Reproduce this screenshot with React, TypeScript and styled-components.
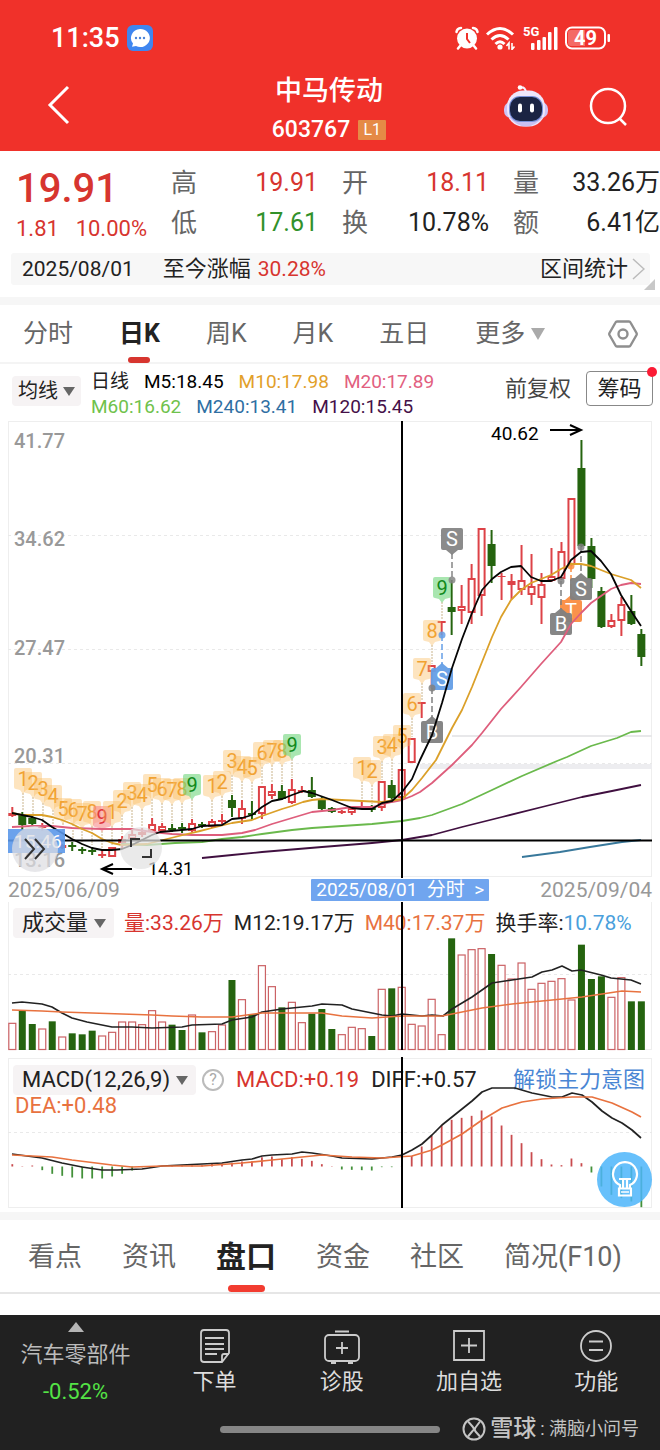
import React from "react";
import styled, { createGlobalStyle, css } from "styled-components";

const GlobalStyle = createGlobalStyle`
  * { box-sizing: border-box; }
  body {
    margin: 0;
    background: #fff;
    color: #222;
    font-family: Roboto, "Noto Sans CJK SC", sans-serif;
  }
  button, a {
    font: inherit;
    color: inherit;
    text-decoration: none;
    border: 0;
    padding: 0;
    background: none;
    cursor: pointer;
  }
  svg { display: block; }
`;

const RED = "#d7352f";
const UP = "#dd4247";
const DOWN = "#25640f";

/* ---------- header ---------- */

const Header = styled.header`
  background: #f0312a;
  color: #fff;
  height: 151px;
`;

const StatusBar = styled.div`
  display: flex;
  align-items: center;
  justify-content: space-between;
  height: 76px;
  padding: 0 49px 0 51px;
`;

const StatusGroup = styled.div<{ $gap: number }>`
  display: flex;
  align-items: center;
  gap: ${(p) => p.$gap}px;
`;

const Clock = styled.span`
  font-size: 27px;
  font-weight: 500;
  line-height: 32px;
`;

const TitleBar = styled.div`
  display: grid;
  grid-template-columns: 1fr auto 1fr;
  padding: 0 32px 0 46px;
  height: 72px;
`;

const BackButton = styled.button`
  justify-self: start;
  align-self: start;
  margin-top: 9px;
`;

const StockTitle = styled.div`
  display: flex;
  flex-direction: column;
  align-items: center;
  margin-right: 16px;
`;

const StockName = styled.h1`
  margin: 0;
  padding-bottom: 10px;
  font-size: 27px;
  font-weight: 500;
  line-height: 30px;
`;

const StockCode = styled.div`
  display: flex;
  align-items: center;
  gap: 8px;
  font-size: 23px;
  font-weight: 500;
  line-height: 28px;
`;

const LevelBadge = styled.span`
  width: 28px;
  text-align: center;
  background: #e58a46;
  font-size: 16px;
  font-weight: 400;
  line-height: 20px;
  border-radius: 1px;
`;

const HeaderActions = styled.div`
  display: flex;
  justify-content: flex-end;
  align-items: flex-start;
  padding-top: 8px;
  gap: 40px;
`;

/* ---------- quote ---------- */

const Quote = styled.section`
  display: grid;
  grid-template-columns: 131px repeat(3, 1fr);
  column-gap: 24px;
  padding: 12px 0 10px 16px;
`;

const LastPrice = styled.div`
  color: ${RED};
  font-size: 40px;
  font-weight: 500;
  line-height: 52px;
`;

const Change = styled.div`
  display: flex;
  justify-content: space-between;
  color: ${RED};
  font-size: 22px;
  line-height: 28px;
`;

const StatList = styled.dl`
  margin: 0;
`;

const Stat = styled.div<{ $color?: string }>`
  display: flex;
  justify-content: space-between;
  line-height: 40px;
  dt { font-size: 26px; color: #666; }
  dd { margin: 0; font-size: 25px; color: ${(p) => p.$color ?? "#222"}; white-space: nowrap; }
`;

const RangeStrip = styled.div`
  position: relative;
  display: flex;
  align-items: center;
  margin: 0 10px 12px 11px;
  padding: 0 5px 0 11px;
  height: 32px;
  background: #f7f7f7;
  font-size: 22px;
  line-height: 32px;
  border-radius: 3px;
`;

const RangeDate = styled.span`
  font-size: 21px;
  margin-right: 29px;
`;

const RangeValue = styled.span`
  font-size: 21px;
  color: ${RED};
  margin-left: 7px;
`;

const RangeLink = styled.a`
  display: flex;
  align-items: center;
  gap: 4px;
  margin-left: auto;
`;

const Fold = styled.svg`
  position: absolute;
  right: -5px;
  bottom: -5px;
`;

const Band = styled.div`
  height: 8px;
  background: #f6f6f6;
`;

/* ---------- period tabs ---------- */

const PeriodTabs = styled.nav`
  display: flex;
  align-items: center;
  gap: 46px;
  height: 59px;
  padding: 0 22px 0 23px;
  border-bottom: 2px solid #f4f4f4;
`;

const PeriodTab = styled.button<{ $active?: boolean }>`
  position: relative;
  display: flex;
  align-items: center;
  gap: 6px;
  font-size: 25px;
  line-height: 59px;
  color: #666;
  ${(p) =>
    p.$active &&
    css`
      color: #222;
      font-weight: 700;
      &::after {
        content: "";
        position: absolute;
        left: 50%;
        bottom: 0;
        width: 22px;
        height: 6px;
        margin-left: -11px;
        border-radius: 3px;
        background: ${RED};
      }
    `}
`;

const SettingsButton = styled.button`
  margin-left: auto;
`;

/* ---------- indicator header ---------- */

const Averages = styled.div`
  display: flex;
  align-items: flex-start;
  height: 57px;
  padding: 7px 7px 0 12px;
`;

const Picker = styled.button<{ $size?: number }>`
  display: flex;
  align-items: center;
  gap: 6px;
  height: 30px;
  padding: 0 8px 0 9px;
  border-radius: 4px;
  background: #f6f3f4;
  font-size: ${(p) => p.$size ?? 22}px;
  line-height: 30px;
  color: #222;
`;

const AveragePicker = styled(Picker)`
  gap: 5px;
  margin-top: 5px;
  padding: 0 6px;
`;

const Legend = styled.div`
  display: grid;
  margin: -2px 0 0 10px;
`;

const LegendRow = styled.div`
  display: flex;
  gap: 15px;
  font-size: 19px;
  line-height: 25px;
  white-space: nowrap;
`;

const Tint = styled.span<{ $color?: string }>`
  color: ${(p) => p.$color ?? "#222"};
`;

const Adjust = styled.button`
  margin-left: auto;
  margin-right: 15px;
  font-size: 22px;
  line-height: 36px;
  color: #444;
`;

const ChipsButton = styled.button`
  position: relative;
  width: 67px;
  height: 35px;
  border: 1px solid #888;
  border-radius: 4px;
  font-size: 22px;
  line-height: 33px;
  &::after {
    content: "";
    position: absolute;
    top: -5px;
    right: -5px;
    width: 10px;
    height: 10px;
    border-radius: 50%;
    background: #fb1b35;
  }
`;

/* ---------- charts ---------- */

const Panel = styled.section`
  display: grid;
  position: relative;
  margin: 0 8px;
  > * { grid-area: 1 / 1; min-width: 0; }
`;

const Chart = styled.svg`
  width: 100%;
  height: auto;
  font-family: Roboto, "Noto Sans CJK SC", sans-serif;
`;

const PanelHeader = styled.div<{ $gap: number }>`
  display: flex;
  align-self: start;
  align-items: center;
  gap: ${(p) => p.$gap}px;
  padding: 5px 0 0 5px;
  font-size: 21px;
  line-height: 32px;
  white-space: nowrap;
`;

const MacdHeader = styled.div`
  align-self: start;
  padding: 8px 7px 0 5px;
  font-size: 22px;
  white-space: nowrap;
`;

const MacdRow = styled.div`
  display: flex;
  align-items: center;
  gap: 12px;
  line-height: 30px;
`;

const DeaRow = styled.div`
  padding-left: 2px;
  line-height: 22px;
  color: #e8723f;
`;

const HelpButton = styled.button`
  width: 22px;
  height: 22px;
  margin-left: -6px;
  border: 2px solid #bbb;
  border-radius: 50%;
  color: #aaa;
  font-size: 16px;
  line-height: 18px;
`;

const UnlockLink = styled.a`
  margin-left: auto;
  color: #4a86d4;
`;

const FloatingButton = styled.button<{ $left: string; $size: number; $bg: string; $bottom: number }>`
  position: absolute;
  left: ${(p) => p.$left};
  bottom: ${(p) => p.$bottom}px;
  width: ${(p) => p.$size}px;
  height: ${(p) => p.$size}px;
  display: grid;
  place-items: center;
  border-radius: 50%;
  background: ${(p) => p.$bg};
`;

const DateRow = styled.div`
  display: flex;
  align-items: center;
  height: 24px;
  margin: 0 8px;
  font-size: 21px;
  line-height: 26px;
  color: #999;
`;

const DatePill = styled.button`
  display: flex;
  align-items: center;
  justify-content: space-between;
  width: 178px;
  height: 22px;
  margin: 0 51px 1px auto;
  padding: 0 5px;
  background: #70a5ef;
  color: #fff;
  font-size: 19px;
  line-height: 22px;
  border-radius: 1px;
`;

/* ---------- section tabs ---------- */

const SectionTabs = styled.nav`
  display: flex;
  gap: 40px;
  height: 74px;
  padding: 0 28px;
  margin-bottom: 21px;
  border-bottom: 2px solid #e6e6e6;
`;

const SectionTab = styled.button<{ $active?: boolean }>`
  position: relative;
  font-size: 27px;
  line-height: 74px;
  color: #666;
  white-space: nowrap;
  ${(p) =>
    p.$active &&
    css`
      color: #222;
      font-size: 30px;
      font-weight: 700;
      &::after {
        content: "";
        position: absolute;
        left: 50%;
        bottom: 0;
        width: 37px;
        height: 7px;
        margin-left: -18px;
        border-radius: 4px;
        background: #f23c30;
      }
    `}
`;

/* ---------- footer ---------- */

const Footer = styled.footer`
  background: #212121;
  color: #ddd;
  height: 135px;
`;

const FooterNav = styled.nav`
  display: grid;
  grid-template-columns: 151px repeat(4, 1fr);
  height: 98px;
`;

const FooterItem = styled.button`
  display: flex;
  flex-direction: column;
  align-items: center;
  padding-top: 12px;
  font-size: 22px;
  line-height: 34px;
`;

const Sector = styled.button`
  display: flex;
  flex-direction: column;
  align-items: center;
  padding-top: 7px;
  font-size: 22px;
  line-height: 37px;
  color: #bbb;
  svg { margin-bottom: 4px; }
`;

const SectorChange = styled.span`
  color: #54e346;
`;

const BottomRow = styled.div`
  display: grid;
  grid-template-columns: 1fr 220px 1fr;
  align-items: center;
  height: 34px;
`;

const HomeBar = styled.div`
  grid-column: 2;
  height: 7px;
  margin-bottom: 2px;
  border-radius: 4px;
  background: #868686;
`;

const Watermark = styled.div`
  display: flex;
  align-items: center;
  gap: 4px;
  justify-content: flex-end;
  padding-right: 21px;
  margin-bottom: 2px;
  font-size: 18px;
  line-height: 28px;
  color: #c4c4c4;
  white-space: nowrap;
`;

const Brand = styled.b`
  font-size: 23px;
  font-weight: 500;
`;

/* ---------- data ---------- */

const FIRST_X = 12.3;
const STEP = 9.985;
const cx = (i: number) => FIRST_X + STEP * i;

/* [direction, high, bodyTop, bodyBottom, low] in chart units */
type Candle = [1 | 0, number, number, number, number];
const candles: (Candle | null)[] = [
  [1, 807, 813, 816, 817], [0, 812, 814, 825, 831], [0, 816, 818, 824, 826], [1, 823, 826, 828, 831],
  null, [1, 844, 845, 848, 849], [0, 842, 845, 847, 851], [0, 847, 849, 851, 854], [0, 847, 850, 852, 855],
  [1, 850, 854, 856, 858], [1, 847, 847, 857, 857], [1, 836, 839, 843, 848], [1, 830, 834, 839, 840],
  [1, 828, 832, 835, 837], [1, 818, 824, 831, 832], [1, 823, 826, 831, 832], [0, 824, 828, 830, 832],
  [0, 823, 827, 829, 833], [1, 819, 823, 831, 832], [0, 822, 824, 826, 828], [1, 819, 821, 827, 828],
  [1, 814, 820, 822, 824], [0, 795, 800, 808, 817], [1, 800, 808, 819, 824], [0, 801, 813, 815, 820],
  [1, 786, 786, 814, 819], [1, 784, 791, 796, 799], [0, 785, 791, 799, 800], [1, 779, 789, 803, 804],
  [1, 786, 790, 792, 793], [0, 777, 790, 797, 798], [0, 796, 800, 809, 810], [0, 807, 808, 812, 813],
  [1, 810, 811, 813, 814], [1, 808, 808, 813, 815], [1, 801, 806, 808, 809], [0, 805, 808, 810, 812],
  [1, 781, 781, 808, 811], [0, 780, 785, 798, 800], [1, 769, 769, 798, 798], [1, 738, 738, 763, 763],
  [1, 702, 702, 704, 718], [1, 665, 665, 672, 688], [1, 621, 621, 623, 635], [0, 580, 607, 612, 635],
  [1, 585, 606, 611, 624], [1, 564, 578, 613, 624], [1, 528, 528, 596, 616], [0, 530, 544, 566, 583],
  [1, 573, 576, 577, 600], [1, 574, 581, 585, 599], [1, 545, 580, 590, 595], [1, 554, 586, 595, 605],
  [1, 573, 584, 598, 624], [1, 548, 576, 581, 582], [1, 542, 551, 579, 580], [1, 498, 498, 565, 566],
  [0, 440, 468, 546, 547], [0, 538, 546, 579, 588], [0, 587, 591, 627, 628], [1, 614, 620, 627, 628],
  [1, 597, 604, 621, 636], [0, 595, 611, 624, 625], [0, 629, 634, 657, 666],
];

/* heights in thirds of a unit above the base line, g = falling day */
const volumes =
  "80r 117g 78g 63r 86g 39r 50g 47g 58g 42r 53r 84r 84r 76r 118r 84r 76g 60g 105r 53g 55r 75r 210g 151r 107g 253r 190r 128g 143r 82r 109g 123g 63g 46r 68r 64r 42g 182r 185g 188r 77r 72r 152r 46r 335g 285r 301r 304r 288g 254r 213r 261r 182r 200r 206r 214r 150r 316g 213g 221g 158r 217r 146g 146g"
    .split(" ")
    .map((v) => ({ h: parseInt(v, 10) / 3, up: v.endsWith("r") }));

const macd = [
  7, 1, 3, -11, -22, -28, -33, -36, -36, -36, -30, -22, -12, -2, 1, 1, 2, 3, 3, 4, 8, 9, 11, 15, 16, 28, 30, 22, 28, 23,
  17, 7, 1, -9, -10, -11, -12, -2, -2, 2, 32, 60, 92, 125, 140, 146, 152, 168, 150, 123, 95, 70, 43, 22, 6, 4, 24, 10,
  -18, -60, -85, -95, -105, -122,
];

const averages: [string, string][] = [
  ["#6ab94c", "122,844 147,845 175,843 202,842 222,839 242,837 262,834 292,830 312,828 342,826 372,824 402,821 420,818 432,815 462,804 492,790 522,776 557,761 567,757 591,746 617,738 631,732 641,731"],
  ["#401040", "202,858 232,855 262,852 322,847 372,843 402,840 432,835 462,827 502,817 542,807 582,797 612,791 641,785"],
  ["#38789b", "522,857 560,852 590,847 622,842 641,840"],
  ["#de5e7c", "12,827 32,826 52,826 72,828 102,829 132,829 152,832 172,834 192,835 222,835 242,833 255,830 272,824 292,818 312,812 332,810 352,807 372,807 392,802 402,800 412,796 420,792 432,783 452,765 472,745 482,733 501,709 521,687 541,664 561,642 571,624 581,613 591,603 601,596 611,589 621,585 631,583 641,584"],
  ["#dba029", "12,813 22,815 42,815 52,817 62,820 72,824 82,829 92,833 102,839 112,843 122,845 147,844 163,840 183,835 200,831 212,828 232,823 252,820 262,816 282,809 292,806 303,802 312,800 322,799 342,800 362,801 382,802 402,799 412,790 422,778 436,760 452,728 462,710 472,687 482,662 492,637 501,617 511,600 521,590 531,583 541,579 551,575 561,569 571,564 581,564 591,566 601,570 611,574 621,577 631,580 641,588"],
  ["#050505", "12,813 32,817 42,820 52,827 62,833 72,839 82,844 92,848 102,850 112,850 122,849 132,845 142,840 152,835 160,832 192,829 202,826 222,825 232,819 242,818 252,815 262,807 272,801 282,799 292,795 303,791 312,793 332,800 342,804 352,808 362,809 372,809 382,803 392,801 402,792 412,779 420,760 432,735 442,703 452,668 462,639 472,613 482,590 492,579 501,572 511,567 521,566 531,577 541,581 551,581 561,577 571,560 581,552 591,551 601,561 611,574 621,595 631,611 641,626"],
];

type TagTone = "amber" | "green" | "red";
const tagTones: Record<TagTone, [string, string]> = {
  amber: ["#fbbb5f", "#f1a231"],
  green: ["#6fd67b", "#128a1c"],
  red: ["#f78b8b", "#e0343d"],
};
/* [label, x, y, lineEnd, tone] */
const counts: [string, number, number, number, TagTone?][] = [
  ["1", 23, 779, 811], ["2", 33, 783, 815], ["3", 43, 789, 822], ["4", 53, 796, 828], ["5", 63, 809, 838],
  ["6", 73, 810, 840], ["7", 82, 814, 845], ["8", 92, 812, 845], ["9", 102, 817, 848, "red"], ["1", 112, 812, 845],
  ["2", 122, 801, 834], ["3", 132, 793, 829], ["4", 142, 795, 827], ["5", 152, 785, 817], ["6", 162, 789, 822],
  ["7", 172, 790, 823], ["8", 182, 789, 822], ["9", 192, 785, 818, "green"], ["1", 212, 786, 818], ["2", 222, 782, 813],
  ["3", 232, 761, 794], ["4", 242, 767, 799], ["5", 252, 768, 800], ["6", 262, 753, 785], ["7", 272, 751, 783],
  ["8", 282, 751, 784], ["9", 292, 745, 778, "green"], ["1", 362, 768, 800], ["2", 372, 771, 804], ["3", 382, 747, 780],
  ["4", 392, 745, 779], ["5", 402, 736, 768], ["6", 412, 704, 737], ["7", 422, 669, 701], ["8", 432, 631, 664],
  ["9", 442, 588, 620, "green"],
];

/* [label, x, y, anchorY, color] */
const trades: [string, number, number, number, string][] = [
  ["S", 452, 539, 580, "#858585"], ["S", 442, 679, 635, "#659fe6"], ["B", 432, 732, 688, "#808080"],
  ["T", 571, 611, 566, "#fa8d42"], ["S", 581, 589, 547, "#808080"], ["B", 561, 624, 581, "#808080"],
];

const GRID = { stroke: "#e9e9e9", strokeWidth: 1, strokeDasharray: "3 3" };

/* ---------- drawings ---------- */

const Caret = ({ w = 12, h = 9, color = "#666" }: { w?: number; h?: number; color?: string }) => (
  <svg width={w} height={h} viewBox="0 0 12 9" preserveAspectRatio="none" aria-hidden="true">
    <path d="M0 0H12L6 9Z" fill={color} />
  </svg>
);

const PriceChart = () => (
  <Chart viewBox="8 421 644 457" role="img" aria-label="日K线图">
    <rect x="8.5" y="421.5" width="643" height="455" fill="none" stroke="#eee" />
    {[535, 649, 763].map((y) => (
      <line key={y} x1="8" x2="652" y1={y + 0.5} y2={y + 0.5} {...GRID} />
    ))}
    <rect x="452" y="735" width="200" height="2" fill="#e8e8ea" />
    <rect x="420" y="764" width="232" height="5" fill="#ededf0" />
    <g fontSize="20" fontWeight="500" fill="#999">
      <text x="14" y="448">41.77</text>
      <text x="14" y="546">34.62</text>
      <text x="14" y="655">27.47</text>
      <text x="14" y="763">20.31</text>
      <text x="14" y="867">13.16</text>
    </g>

    {candles.map((c, i) => {
      if (!c) return null;
      const [up, hi, top, bottom, lo] = c;
      const x = cx(i);
      const color = up ? UP : DOWN;
      const thin = bottom - top <= 3;
      return (
        <g key={i} stroke={color} strokeWidth="2">
          <line x1={x} x2={x} y1={hi} y2={top} />
          <line x1={x} x2={x} y1={bottom} y2={lo} />
          {thin ? (
            <rect x={x - 4} y={top} width="8" height={bottom - top} fill={color} stroke="none" />
          ) : (
            <rect x={x - 3} y={top + 1} width="6" height={bottom - top - 2} fill={up ? "#fff" : color} />
          )}
        </g>
      );
    })}

    {counts.map(([label, x, y, end, tone = "amber"], i) => {
      const [bg, fg] = tagTones[tone];
      return (
        <g key={i}>
          <line x1={x} x2={x} y1={y + 14} y2={end} stroke="#c9b48c" strokeDasharray="2 1" />
          <path
            d={`M${x - 7} ${y - 11}h14q2 0 2 2v17q0 2-2 2l-4 1-3 4-3-4-4-1q-2 0-2-2v-17q0-2 2-2z`}
            fill={bg}
            opacity={tone === "amber" ? 0.4 : 0.6}
          />
          <text x={x} y={y + 7} fontSize="20" textAnchor="middle" fill={fg}>{label}</text>
        </g>
      );
    })}

    {trades.map(([label, x, y, anchor, color], i) => {
      const down = anchor > y;
      const tip = down ? `M${x - 6} ${y + 11}h12l-6 5z` : `M${x - 6} ${y - 11}h12l-6-5z`;
      return (
        <g key={i}>
          <line x1={x} x2={x} y1={down ? y + 14 : anchor} y2={down ? anchor : y - 14} stroke={color} strokeWidth="1.5" strokeDasharray="6 3" />
          <circle cx={x} cy={anchor} r="3.5" fill={color} opacity="0.85" />
          <g opacity="0.95">
            <path d={tip} fill={color} />
            <rect x={x - 11} y={y - 11} width="22" height="22" rx="2" fill={color} />
          </g>
          <text x={x} y={y + 7} fontSize="20" textAnchor="middle" fill="#fff">{label}</text>
        </g>
      );
    })}

    {averages.map(([color, points]) => (
      <polyline key={color} points={points} fill="none" stroke={color} strokeWidth="1.8" strokeLinejoin="round" />
    ))}

    <g stroke="#000" strokeWidth="2" fill="none">
      <path d="M550 430h30M570 425l11 5-11 5" />
      <path d="M132 869h-29M113 864l-11 5 11 5" />
      <path d="M8 840.5h644M402 421v457" />
    </g>
    <text x="491" y="440" fontSize="19" fill="#000">40.62</text>
    <text x="148" y="875" fontSize="18" fill="#000">14.31</text>

    <rect x="8" y="829" width="57" height="24" fill="#5b98ea" opacity="0.9" />
    <text x="14" y="848" fontSize="19" fill="#fff">15.46</text>
  </Chart>
);

const VolumeChart = () => (
  <Chart viewBox="8 902 644 155" role="img" aria-label="成交量图">
    <rect x="8.5" y="900.5" width="643" height="149" fill="none" stroke="#eee" />
    <line x1="8" x2="652" y1="974.5" y2="974.5" {...GRID} />
    {volumes.map(({ h, up }, i) =>
      up ? (
        <rect key={i} x={cx(i) - 3.5} y={1050 - h} width="7" height={h - 0.5} fill="#fff" stroke="#cb6265" strokeWidth="1.2" />
      ) : (
        <rect key={i} x={cx(i) - 3.5} y={1050 - h} width="7" height={h} fill={DOWN} />
      )
    )}
    <polyline
      fill="none" stroke="#222" strokeWidth="1.6" strokeLinejoin="round"
      points="12,1003 22,1002 42,1004 52,1007 62,1013 72,1018 87,1022 112,1027 132,1027 152,1028 182,1027 192,1025 222,1024 232,1020 252,1017 262,1012 282,1009 302,1007 312,1006 322,1004 342,1005 352,1009 362,1011 382,1015 392,1016 402,1014 422,1016 432,1015 443,1016 452,1009 472,997 492,983 512,980 532,977 542,972 552,970 562,966 572,971 581,970 601,975 611,978 631,980 641,984"
    />
    <polyline
      fill="none" stroke="#e8723f" strokeWidth="1.6" strokeLinejoin="round"
      points="12,1010 42,1011 62,1012 122,1014 152,1015 172,1016 202,1017 232,1017 262,1013 292,1013 322,1013 342,1016 372,1018 402,1016 442,1016 452,1014 482,1008 512,1004 542,1001 582,997 602,994 622,991 641,992"
    />
    <path d="M402 902v148" stroke="#000" strokeWidth="2" />
  </Chart>
);

const MacdChart = () => (
  <Chart viewBox="8 1057 644 155" role="img" aria-label="MACD图">
    <rect x="8.5" y="1058.5" width="643" height="149" fill="none" stroke="#eee" />
    <line x1="8" x2="652" y1="1132.5" y2="1132.5" {...GRID} />
    {macd.map((v, i) => (
      <line key={i} x1={cx(i)} x2={cx(i)} y1={1166.5} y2={1166.5 - v / 3} stroke={v > 0 ? "#c94b4e" : "#43913a"} strokeWidth="1.8" />
    ))}
    <polyline
      fill="none" stroke="#222" strokeWidth="1.7" strokeLinejoin="round"
      points="12,1154 42,1158 62,1163 82,1167 102,1170 117,1170 142,1169 162,1166 202,1164 222,1163 242,1160 252,1159 262,1156 272,1155 292,1154 302,1152 312,1153 332,1156 342,1158 372,1159 392,1157 402,1155 412,1150 422,1144 432,1135 442,1125 452,1117 472,1101 482,1092 492,1088 515,1088 532,1093 552,1097 562,1097 572,1093 582,1095 592,1102 602,1111 612,1118 622,1123 632,1130 641,1138"
    />
    <polyline
      fill="none" stroke="#e8723f" strokeWidth="1.7" strokeLinejoin="round"
      points="12,1155 32,1156 52,1157 72,1160 112,1165 132,1167 162,1166 202,1166 242,1163 272,1160 302,1157 322,1155 352,1157 382,1158 412,1156 432,1150 442,1145 462,1134 482,1120 502,1108 522,1102 542,1099 572,1097 592,1097 612,1103 632,1112 641,1117"
    />
    <path d="M402 1057v151" stroke="#000" strokeWidth="2" />
  </Chart>
);

const ChatAppIcon = () => (
  <svg width="26" height="26" viewBox="0 0 26 26" aria-hidden="true">
    <rect width="26" height="26" rx="6" fill="#3f86f0" />
    <path d="M13 4a9.5 9 0 1 1-4 17l-4 .8 1-3.300A9.500 9 0 0 1 13 4z" fill="#fff" />
    <g fill="#4a83d8"><circle cx="9" cy="13" r="1.200" /><circle cx="13" cy="13" r="1.200" /><circle cx="17" cy="13" r="1.200" /></g>
  </svg>
);

const AlarmIcon = () => (
  <svg width="24" height="24" viewBox="0 0 24 24" aria-hidden="true">
    <g fill="none" stroke="#fff" strokeWidth="2.500" strokeLinecap="round">
      <path d="M1.500 6Q2 2.500 6 2M22.500 6Q22 2.500 18 2M5 20l-2 2.500M19 20l2 2.500" />
    </g>
    <circle cx="12" cy="12.500" r="10" fill="#fff" />
    <path d="M12 7v6l3 4" fill="none" stroke="#f0312a" strokeWidth="2" />
  </svg>
);

const WifiIcon = () => (
  <svg width="30" height="24" viewBox="0 0 30 24" aria-hidden="true">
    <g fill="none" stroke="#fff" strokeWidth="3">
      <path d="M1 8.500Q14 -3.500 27 8.500M5.500 13.500Q14 5.500 22.500 13.500M9.500 18Q14 13.500 18.500 18" />
    </g>
    <circle cx="14" cy="21" r="2.600" fill="#fff" />
    <path d="M23 23.500v-6.500l-2.500 3M26 17v6.500l2.500-3" fill="none" stroke="#fff" strokeWidth="1.600" />
  </svg>
);

const SignalIcon = () => (
  <svg width="35" height="24" viewBox="0 0 35 24" aria-label="5G" role="img">
    <text x="0" y="10" fontSize="13" fontWeight="700" fill="#fff" fontFamily="Roboto, sans-serif">5G</text>
    <g fill="#fff">
      <rect x="8" y="17" width="3.500" height="7" rx="1" />
      <rect x="14" y="14" width="3.500" height="10" rx="1" />
      <rect x="19.500" y="11" width="3.500" height="13" rx="1" />
      <rect x="25" y="6" width="3.500" height="18" rx="1" />
      <rect x="31" y="1" width="3.500" height="23" rx="1" />
    </g>
  </svg>
);

const BatteryIcon = () => (
  <svg width="46" height="24" viewBox="0 0 46 24" aria-label="49%" role="img">
    <rect x="1" y="1.500" width="39" height="21" rx="6" fill="none" stroke="#fff" strokeWidth="2" />
    <path d="M6 4h14v16H6q-3 0-3-3V7q0-3 3-3z" fill="#f46a65" />
    <rect x="42.500" y="8" width="2.500" height="8" rx="1" fill="#fff" />
    <text x="20.500" y="19" fontSize="20" fontWeight="700" textAnchor="middle" fill="#fff" fontFamily="Roboto, sans-serif">49</text>
  </svg>
);

const RobotIcon = () => (
  <svg width="46" height="44" viewBox="0 0 46 44" aria-hidden="true">
    <path d="M17 3.500q6-1 6 6" fill="none" stroke="#f6eefa" strokeWidth="2" />
    <circle cx="17" cy="3.500" r="2.300" fill="#fff" />
    <rect x="1" y="18" width="44" height="16" rx="7" fill="#cdc3f6" />
    <rect x="4" y="6.500" width="38" height="36" rx="16" fill="#eee6fb" />
    <path d="M6 33q8 9.500 17 9.500T40 33z" fill="#c9bff2" />
    <rect x="6" y="12" width="34" height="26" rx="11" fill="#7890d8" />
    <rect x="7" y="13" width="32" height="24" rx="10" fill="#1b2443" />
    <rect x="15" y="19.500" width="4" height="9" rx="2" fill="#fff" />
    <rect x="27" y="19.500" width="4" height="9" rx="2" fill="#fff" />
  </svg>
);

const App = () => (
  <>
    <GlobalStyle />
    <Header>
      <StatusBar>
        <StatusGroup $gap={7}>
          <Clock>11:35</Clock>
          <ChatAppIcon />
        </StatusGroup>
        <StatusGroup $gap={7}>
          <AlarmIcon />
          <WifiIcon />
          <SignalIcon />
          <BatteryIcon />
        </StatusGroup>
      </StatusBar>
      <TitleBar>
        <BackButton aria-label="返回">
          <svg width="24" height="40" viewBox="0 0 24 40">
            <path d="M22 2L4 20l18 18" fill="none" stroke="#fff" strokeWidth="3" />
          </svg>
        </BackButton>
        <StockTitle>
          <StockName>中马传动</StockName>
          <StockCode>603767 <LevelBadge>L1</LevelBadge></StockCode>
        </StockTitle>
        <HeaderActions>
          <button aria-label="智能助手"><RobotIcon /></button>
          <button aria-label="搜索">
            <svg width="39" height="44" viewBox="0 0 39 44">
              <circle cx="19" cy="22" r="17" fill="none" stroke="#fff" strokeWidth="2.500" />
              <path d="M30 34l7 7" stroke="#fff" strokeWidth="2.500" />
            </svg>
          </button>
        </HeaderActions>
      </TitleBar>
    </Header>

    <main>
      <Quote>
        <div>
          <LastPrice>19.91</LastPrice>
          <Change><span>1.81</span><span>10.00%</span></Change>
        </div>
        <StatList>
          <Stat $color={RED}><dt>高</dt><dd>19.91</dd></Stat>
          <Stat $color="#32912a"><dt>低</dt><dd>17.61</dd></Stat>
        </StatList>
        <StatList>
          <Stat $color={RED}><dt>开</dt><dd>18.11</dd></Stat>
          <Stat><dt>换</dt><dd>10.78%</dd></Stat>
        </StatList>
        <StatList>
          <Stat><dt>量</dt><dd>33.26万</dd></Stat>
          <Stat><dt>额</dt><dd>6.41亿</dd></Stat>
        </StatList>
      </Quote>

      <RangeStrip>
        <RangeDate>2025/08/01</RangeDate>
        至今涨幅
        <RangeValue>30.28%</RangeValue>
        <RangeLink href="#range">
          区间统计
          <svg width="13" height="22" viewBox="0 0 13 22" aria-hidden="true">
            <path d="M1 1l11 10L1 21" fill="none" stroke="#bbb" strokeWidth="1.500" />
          </svg>
        </RangeLink>
        <Fold width="11" height="11" viewBox="0 0 11 11" aria-hidden="true">
          <path d="M11 0v11H0z" fill="#c8c8c8" />
        </Fold>
      </RangeStrip>
      <Band />

      <PeriodTabs>
        <PeriodTab>分时</PeriodTab>
        <PeriodTab $active>日K</PeriodTab>
        <PeriodTab>周K</PeriodTab>
        <PeriodTab>月K</PeriodTab>
        <PeriodTab>五日</PeriodTab>
        <PeriodTab>更多<Caret w={14} h={12} color="#aaa" /></PeriodTab>
        <SettingsButton aria-label="图表设置">
          <svg width="30" height="30" viewBox="0 0 30 30">
            <path d="M9 2.500h12q1 0 1.500 1L28.500 14q.5 1 0 2L22.500 26.500q-.5 1-1.500 1H9q-1 0-1.500-1L1.500 16q-.5-1 0-2L7.500 3.500q.5-1 1.500-1z" fill="none" stroke="#8f8f8f" strokeWidth="2.400" />
            <circle cx="15" cy="15" r="4.500" fill="none" stroke="#8f8f8f" strokeWidth="2.400" />
          </svg>
        </SettingsButton>
      </PeriodTabs>

      <Averages>
        <AveragePicker $size={20}>均线<Caret /></AveragePicker>
        <Legend>
          <LegendRow>
            <Tint>日线</Tint>
            <Tint $color="#000">M5:18.45</Tint>
            <Tint $color="#e2a02a">M10:17.98</Tint>
            <Tint $color="#e2607f">M20:17.89</Tint>
          </LegendRow>
          <LegendRow>
            <Tint $color="#6fc24c">M60:16.62</Tint>
            <Tint $color="#2f6fa3">M240:13.41</Tint>
            <Tint $color="#451048">M120:15.45</Tint>
          </LegendRow>
        </Legend>
        <Adjust>前复权</Adjust>
        <ChipsButton>筹码</ChipsButton>
      </Averages>

      <Panel>
        <PriceChart />
        <FloatingButton $left="4px" $size={46} $bottom={6} $bg="rgba(222, 222, 226, 0.72)" aria-label="展开">
          <svg width="26" height="24" viewBox="0 0 26 24">
            <path d="M3 2l9 10-9 10M13 2l9 10-9 10" fill="none" stroke="#333" strokeWidth="2" />
          </svg>
        </FloatingButton>
        <FloatingButton $left="112px" $size={42} $bottom={9} $bg="rgba(226, 226, 226, 0.72)" aria-label="全屏">
          <svg width="26" height="26" viewBox="0 0 26 26">
            <path d="M3 12V4h9M23 14v8h-9" fill="none" stroke="#333" strokeWidth="2" />
          </svg>
        </FloatingButton>
      </Panel>
      <DateRow>
        <span>2025/06/09</span>
        <DatePill><span>2025/08/01</span><span>分时</span><span>&gt;</span></DatePill>
        <span>2025/09/04</span>
      </DateRow>

      <Panel>
        <PanelHeader $gap={10}>
          <Picker>成交量<Caret /></Picker>
          <Tint $color={RED}>量:33.26万</Tint>
          <Tint>M12:19.17万</Tint>
          <Tint $color="#e8723f">M40:17.37万</Tint>
          <Tint>换手率:<Tint $color="#4a9fdc">10.78%</Tint></Tint>
        </PanelHeader>
        <VolumeChart />
      </Panel>

      <Panel>
        <MacdHeader>
          <MacdRow>
            <Picker>MACD(12,26,9)<Caret /></Picker>
            <HelpButton aria-label="指标说明">?</HelpButton>
            <Tint $color={RED}>MACD:+0.19</Tint>
            <Tint>DIFF:+0.57</Tint>
            <UnlockLink href="#unlock">解锁主力意图</UnlockLink>
          </MacdRow>
          <DeaRow>DEA:+0.48</DeaRow>
        </MacdHeader>
        <MacdChart />
        <FloatingButton $left="calc(100% - 55px)" $size={55} $bottom={5} $bg="rgba(76, 181, 250, 0.85)" aria-label="解读">
          <svg width="30" height="38" viewBox="0 0 30 38">
            <g fill="none" stroke="#fff" strokeWidth="2.200">
              <path d="M10 27v-3a12 12 0 1 1 10 0v3M9 18h12M13 18v10M17 18v10M9 27.500h12v7H9z" />
              <path d="M11 31h8" strokeWidth="1.500" />
            </g>
          </svg>
        </FloatingButton>
      </Panel>
      <Band />

      <SectionTabs>
        <SectionTab>看点</SectionTab>
        <SectionTab>资讯</SectionTab>
        <SectionTab $active>盘口</SectionTab>
        <SectionTab>资金</SectionTab>
        <SectionTab>社区</SectionTab>
        <SectionTab>简况(F10)</SectionTab>
      </SectionTabs>
    </main>

    <Footer>
      <FooterNav>
        <Sector>
          <svg width="16" height="10" viewBox="0 0 16 10" aria-hidden="true">
            <path d="M8 0l8 10H0z" fill="#b5b5b5" />
          </svg>
          <span>汽车零部件</span>
          <SectorChange>-0.52%</SectorChange>
        </Sector>
        <FooterItem>
          <svg width="36" height="38" viewBox="0 0 36 38" fill="none" stroke="#ccc" strokeWidth="1.800" aria-hidden="true">
            <path d="M7 3h22q3 0 3 3v20l-7 9H7q-3 0-3-3V6q0-3 3-3zM32 27h-5q-2 0-2 2v6M8 11h19M8 17h19M8 22h19M8 27h12" />
          </svg>
          下单
        </FooterItem>
        <FooterItem>
          <svg width="36" height="38" viewBox="0 0 36 38" fill="none" stroke="#ccc" strokeWidth="1.800" aria-hidden="true">
            <rect x="1" y="8" width="34" height="26" rx="4" />
            <path d="M11 4.500h14M18 15v12M12 21h12" />
            <path d="M7 35.500h5M24 35.500h5" strokeWidth="3" />
          </svg>
          诊股
        </FooterItem>
        <FooterItem>
          <svg width="36" height="38" viewBox="0 0 36 38" fill="none" stroke="#ccc" strokeWidth="1.800" aria-hidden="true">
            <path d="M3 4h30v29H3zM18 11v15M10 18.500h16" />
          </svg>
          加自选
        </FooterItem>
        <FooterItem>
          <svg width="36" height="38" viewBox="0 0 36 38" fill="none" stroke="#ccc" strokeWidth="1.800" aria-hidden="true">
            <circle cx="18" cy="19" r="15" />
            <path d="M11 14.500h14M11 23h14" />
          </svg>
          功能
        </FooterItem>
      </FooterNav>
      <BottomRow>
        <HomeBar />
        <Watermark>
          <svg width="24" height="24" viewBox="0 0 24 24" fill="none" stroke="#c4c4c4" strokeWidth="2" aria-hidden="true">
            <circle cx="12" cy="12" r="10.500" />
            <path d="M6 4.500q2 2 4.500 5T10.500 14L6 19.500M18 4.500l-4.500 6q-1.500 2 0 4l4.500 5" />
          </svg>
          <Brand>雪球</Brand>
          <span>: 满脑小问号</span>
        </Watermark>
      </BottomRow>
    </Footer>
  </>
);

export default App;
